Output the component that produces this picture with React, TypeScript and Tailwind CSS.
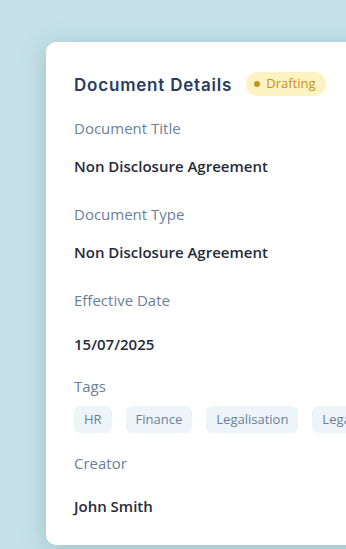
import React from 'react';

const fields = [
  { label: 'Document Title', value: 'Non Disclosure Agreement' },
  { label: 'Document Type', value: 'Non Disclosure Agreement' },
  { label: 'Effective Date', value: '15/07/2025' },
];

const tags = ['HR', 'Finance', 'Legalisation', 'Legalisation'];

export default function App() {
  return (
    <div className="h-[549px] w-[346px] overflow-hidden bg-[#c6e2e8] font-['Open_Sans',sans-serif]">
      <div className="ml-[46px] mt-[42px] w-[330px] rounded-[10px] bg-white pl-[28px] pt-[30px] pb-[29px] shadow-[0_4px_24px_rgba(60,110,125,0.3)]">
        <div className="flex h-6 items-center gap-[14px]">
          <h2 className="pt-[3px] font-['Inter',sans-serif] text-[17px] font-semibold tracking-[0.8px] text-[#2b3a5e]">
            Document Details
          </h2>
          <span className="flex h-6 items-center gap-[6px] rounded-full bg-[#fdf3c2] pl-[8px] pr-[10px] text-[13px] text-[#c4941a]">
            <span className="h-[6px] w-[6px] rounded-full bg-[#c4941a]" />
            Drafting
          </span>
        </div>

        <div className="mt-[22px] flex flex-col">
          {fields.map((f, i) => (
            <div key={i} className={i === 0 ? '' : 'mt-[28px]'}>
              <p className="text-[15px] leading-5 text-[#6a7f9b]">{f.label}</p>
              <p className={`${i === 2 ? 'mt-[24px]' : 'mt-[18px]'} text-[15px] font-semibold leading-5 text-[#262b3b]`}>
                {f.value}
              </p>
            </div>
          ))}

          <p className="mt-[22px] text-[15px] leading-5 text-[#6a7f9b]">Tags</p>
          <div className="mt-[10px] flex gap-[14px] whitespace-nowrap">
            {tags.map((t, i) => (
              <span key={i} className="flex h-[27px] items-center rounded-[6px] bg-[#eef5f8] px-[10px] text-[13px] text-[#6a7f9b]">
                {t}
              </span>
            ))}
          </div>

          <p className="mt-[20px] text-[15px] leading-5 text-[#6a7f9b]">Creator</p>
          <p className="mt-[23px] text-[15px] font-semibold leading-5 text-[#262b3b]">John Smith</p>
        </div>
      </div>
    </div>
  );
}
